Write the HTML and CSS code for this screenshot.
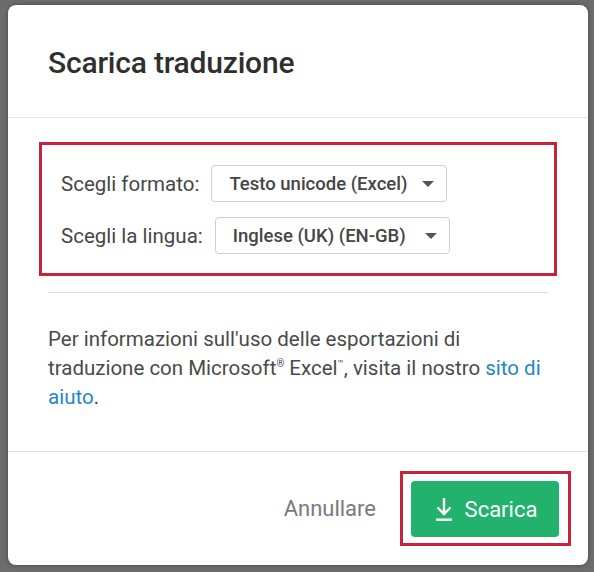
FILE: index.html
```html
<!DOCTYPE html>
<html lang="it">
<head>
    <meta charset="UTF-8">
    <meta name="viewport" content="width=device-width, initial-scale=1.0">
    <title>Scarica traduzione</title>
    <link rel="stylesheet" href="styles.css">
</head>
<body>
    <div class="dialog">
        <div class="dialog-header">
            <h1>Scarica traduzione</h1>
        </div>
        <div class="dialog-body">
            <div class="options highlight">
                <div class="option-row">
                    <span class="option-label">Scegli formato:</span>
                    <div class="select select-format">
                        <span>Testo unicode (Excel)</span>
                        <span class="caret"></span>
                    </div>
                </div>
                <div class="option-row">
                    <span class="option-label">Scegli la lingua:</span>
                    <div class="select select-lang">
                        <span>Inglese (UK) (EN-GB)</span>
                        <span class="caret"></span>
                    </div>
                </div>
            </div>
            <hr class="divider">
            <p class="info">
                Per informazioni sull'uso delle esportazioni di
                traduzione con Microsoft<sup>&reg;</sup> Excel<sup>&trade;</sup>, visita il nostro <a href="#">sito di aiuto</a>.
            </p>
        </div>
        <div class="dialog-footer">
            <button class="btn-cancel">Annullare</button>
            <div class="highlight btn-wrap">
                <button class="btn-download">
                    <svg width="18" height="25" viewBox="0 0 18 25">
                        <path d="M9 1 V17 M2.5 10.5 L9 17 L15.5 10.5" fill="none" stroke="#fff" stroke-width="2.4"/>
                        <rect x="1" y="21.5" width="16" height="2.4" fill="#fff"/>
                    </svg>
                    Scarica
                </button>
            </div>
        </div>
    </div>
</body>
</html>
```

FILE: styles.css
```css
:root {
  --backdrop: #6c6c6c;
  --line: #e4e4e4;
  --text: #454545;
  --muted: #7a7a7a;
  --red: #c4253b;
  --green: #22b26d;
  --link: #1d87c9;
}

html, body {
  height: 100%;
}

body {
  margin: 0;
  background: var(--backdrop);
  font-family: Roboto, "Liberation Sans", sans-serif;
  color: var(--text);
  overflow: hidden;
}

.dialog {
  box-sizing: border-box;
  width: 580px;
  height: 560px;
  margin: 5px 0 0 8px;
  background: #fff;
  border-radius: 8px;
  box-shadow: 0 0 4px rgba(0, 0, 0, 0.35);
  display: flex;
  flex-direction: column;
}

.dialog-header {
  height: 113px;
  border-bottom: 1px solid var(--line);
  display: flex;
  align-items: center;
  padding: 2px 40px 0;
  box-sizing: border-box;
}

.dialog-header h1 {
  margin: 0;
  font-size: 30px;
  font-weight: 500;
  color: #2f2f2f;
  letter-spacing: -0.2px;
}

.dialog-body {
  flex: 1;
  padding: 24px 40px 0;
}

.highlight {
  border: 3px solid var(--red);
}

.options {
  margin: 0 -9px;
  padding: 20px 19px 19px;
  display: flex;
  flex-direction: column;
  gap: 15px;
}

.option-row {
  display: flex;
  align-items: center;
  gap: 12px;
}

.option-label {
  font-size: 20.5px;
  color: #474747;
}

.select {
  box-sizing: border-box;
  height: 37px;
  border: 1px solid #cfcfcf;
  border-radius: 4px;
  display: flex;
  align-items: center;
  justify-content: space-between;
  padding: 0 12px 0 17px;
  font-size: 18.5px;
  font-weight: 500;
  color: #454545;
}

.select-format {
  width: 236px;
}

.select-lang {
  width: 235px;
}

.caret {
  width: 0;
  height: 0;
  border-left: 6px solid transparent;
  border-right: 6px solid transparent;
  border-top: 6px solid #555;
}

.divider {
  border: 0;
  border-top: 1px solid #dedede;
  margin: 16px 0 0;
}

.info {
  margin: 32px -6px 0 0;
  font-size: 20.5px;
  line-height: 29px;
  color: #4a4a4a;
}

.info sup {
  font-size: 10px;
  line-height: 0;
  vertical-align: 8px;
}

.info a {
  color: var(--link);
  text-decoration: none;
}

.dialog-footer {
  height: 114px;
  box-sizing: border-box;
  border-top: 1px solid var(--line);
  display: flex;
  align-items: center;
  justify-content: flex-end;
  gap: 24px;
  padding: 0 17px 0 0;
}

.btn-cancel {
  background: none;
  border: 0;
  padding: 0;
  font-family: inherit;
  font-size: 22px;
  color: var(--muted);
}

.btn-wrap {
  padding: 7px 9px 6px 8px;
}

.btn-download {
  width: 148px;
  height: 56px;
  background: var(--green);
  border: 0;
  border-radius: 4px;
  color: #fff;
  font-family: inherit;
  font-size: 22px;
  display: flex;
  align-items: center;
  justify-content: center;
  gap: 12px;
  padding: 0 0 0 2px;
}

.btn-download svg {
  display: block;
}
```
